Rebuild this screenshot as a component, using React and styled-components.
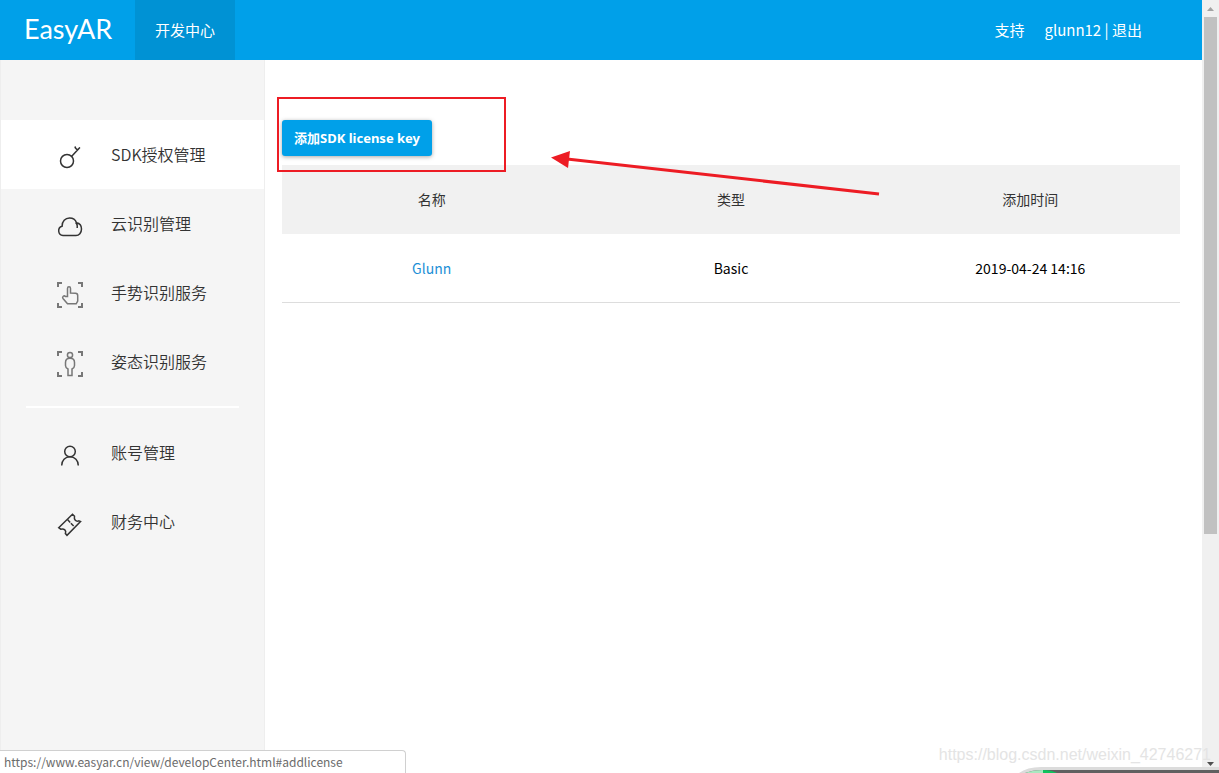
import React from 'react';
import styled, { createGlobalStyle } from 'styled-components';

const GlobalStyle = createGlobalStyle`
  * {
    box-sizing: border-box;
  }
  body {
    margin: 0;
    background: #fff;
    color: #333;
    font-family: 'Noto Sans CJK SC', sans-serif;
    font-size: 14px;
  }
  a {
    color: inherit;
    text-decoration: none;
  }
`;

const Window = styled.div`
  position: relative;
  display: flex;
  height: 100vh;
  overflow: hidden;
`;

const Page = styled.div`
  flex: 1;
  min-width: 0;
  display: flex;
  flex-direction: column;
`;

const Header = styled.header`
  display: flex;
  align-items: center;
  height: 60px;
  flex-shrink: 0;
  padding-right: 60px;
  background: #00a0e9;
  color: #fff;
  font-size: 15px;
`;

const Logo = styled.a`
  width: 135px;
  padding-left: 24px;
  font-family: Lato, sans-serif;
  font-size: 27px;
  font-weight: 400;
  line-height: 58px;
  align-self: flex-start;
`;

const HeaderTab = styled.a`
  width: 100px;
  line-height: 60px;
  text-align: center;
  background: #0092d4;
`;

const UserNav = styled.nav`
  display: flex;
  gap: 20px;
  margin-left: auto;
  line-height: 60px;
`;

const Body = styled.div`
  flex: 1;
  display: flex;
  min-height: 0;
`;

const Sidebar = styled.aside`
  width: 265px;
  flex-shrink: 0;
  padding-top: 60px;
  border: solid #eee;
  border-width: 0 1px;
  background: #f5f5f5;
`;

const MenuItem = styled.a`
  display: flex;
  align-items: center;
  gap: 27px;
  height: 69px;
  padding: 0 0 2px 55px;
  background: ${props => (props.$active ? '#fff' : 'transparent')};
  font-size: 16px;
  font-weight: 350;
`;

const Icon = styled.svg`
  width: 28px;
  height: 28px;
  margin-top: 6px;
  flex-shrink: 0;
  fill: none;
  stroke: ${props => props.$color || '#333'};
  stroke-width: 1.5;
`;

const Divider = styled.hr`
  height: 2px;
  margin: 10px 25px;
  border: 0;
  background: #fff;
`;

const Content = styled.main`
  flex: 1;
  padding: 60px 22px 0 17px;
`;

const AddButton = styled.button`
  display: block;
  height: 36px;
  margin-bottom: 9px;
  padding: 0 12px 2px;
  border: 0;
  border-radius: 3px;
  background: #00a0e9;
  box-shadow: 0 1px 4px rgba(0, 0, 0, 0.35);
  color: #fff;
  font-family: 'Noto Sans', 'Noto Sans CJK SC', sans-serif;
  font-size: 13px;
  font-weight: 700;
`;

const Table = styled.table`
  width: 100%;
  table-layout: fixed;
  border-collapse: collapse;
  text-align: center;
`;

const HeadCell = styled.th`
  height: 69px;
  padding: 0 0 2px;
  background: #f1f1f1;
  font-weight: 400;
`;

const Cell = styled.td`
  height: 68px;
  padding: 0;
  border-bottom: 1px solid #ddd;
  color: #000;
`;

const NameLink = styled.a`
  && {
    color: #1c8fd6;
  }
`;

const Scrollbar = styled.div`
  display: flex;
  flex-direction: column;
  align-items: center;
  width: 17px;
  flex-shrink: 0;
  background: #f0f0f0;
`;

const ScrollArrow = styled.svg`
  width: 17px;
  height: 17px;
  fill: ${props => props.$color};
`;

const ScrollTrack = styled.div`
  flex: 1;
  width: 13px;
`;

const ScrollThumb = styled.div`
  height: 70%;
  background: #c1c1c1;
`;

// Things lying over the page
const Marks = styled.svg`
  position: absolute;
  left: 277px;
  top: 97px;
  width: 603px;
  height: 100px;
  pointer-events: none;
`;

const StatusBar = styled.div`
  position: absolute;
  left: 0;
  bottom: 0;
  width: 406px;
  height: 23px;
  padding-left: 4px;
  border: solid #d0d0d0;
  border-width: 1px 1px 0 0;
  border-radius: 0 4px 0 0;
  background: #fff;
  color: #6b6b6b;
  font-size: 12px;
  line-height: 22px;
`;

const Watermark = styled.div`
  position: absolute;
  right: 8px;
  bottom: 8px;
  color: #e4e4e4;
  font-family: 'Liberation Sans', sans-serif;
  font-size: 16px;
  line-height: 20px;
`;

const Dock = styled.svg`
  position: absolute;
  right: 0;
  bottom: 0;
  width: 200px;
  height: 6px;
`;

const Corners = () => (
  <path d="M2 6V2h4M22 2h4v4M26 22v4h-4M6 26H2v-4" strokeWidth="2" />
);

const KeyIcon = () => (
  <Icon viewBox="0 0 28 28">
    <circle cx="11" cy="18" r="6.5" />
    <path d="M15.500 13.500 22.500 6M18.500 4.500l1.500-.5M18.800 4.300l2.700 3M22.500 6l1.300-1.500M20.500 7.500l3.500-3" />
  </Icon>
);

const CloudIcon = () => (
  <Icon viewBox="0 0 28 28">
    <path d="M7 23.500a4.700 4.700 0 0 1-.9-9.200C6 9.300 9.300 6 13.500 6c3.300 0 6 1.800 7 4.700 3.300.6 5 3.500 5 6.300 0 3.700-2.500 6.500-5.500 6.500zM19.500 10.500c1.500.8 2 2.500 1.700 5.500" />
  </Icon>
);

const GestureIcon = () => (
  <Icon viewBox="0 0 28 28" $color="#777">
    <Corners />
    <path d="M11.500 15.500V7.500c0-2.200 3-2.200 3 0V12l5 .3c1.600.1 2.200 1 2.200 2.200v5.500l-1.500 2.800h-8.700l-4.500-5.300c-1.200-1.800 1-3.500 2.500-2z" />
  </Icon>
);

const PoseIcon = () => (
  <Icon viewBox="0 0 28 28" $color="#777">
    <Corners />
    <circle cx="14" cy="5" r="2.6" />
    <path d="M12 25.500v-6.500c-1.800-.8-2.500-2-2.500-3.500v-3c0-2.700 1.700-4.200 4.500-4.200s4.500 1.500 4.500 4.200v3c0 1.500-.7 2.700-2.500 3.500v6.500z" />
  </Icon>
);

const AccountIcon = () => (
  <Icon viewBox="0 0 28 28">
    <circle cx="14" cy="10.5" r="5.3" />
    <path d="M5.700 24.500c0-5 3.500-8.700 8.300-8.700s8.300 3.700 8.300 8.700" />
  </Icon>
);

const TicketIcon = () => (
  <Icon viewBox="0 0 28 28">
    <path d="M2.700 17.700 16.500 4.300l2 1.900c-.8 3.600 1.500 5.600 4.200 4.700l1.800.7L11 25.300l-1.600-1.800c1.200-3-1.200-5.300-4.700-4.300z" />
    <path d="m11.500 9.500 6.700 7.200" strokeDasharray="4 1" />
  </Icon>
);

const services = [
  { label: 'SDK授权管理', icon: KeyIcon, active: true },
  { label: '云识别管理', icon: CloudIcon },
  { label: '手势识别服务', icon: GestureIcon },
  { label: '姿态识别服务', icon: PoseIcon },
];

const account = [
  { label: '账号管理', icon: AccountIcon },
  { label: '财务中心', icon: TicketIcon },
];

const licenses = [{ name: 'Glunn', type: 'Basic', added: '2019-04-24 14:16' }];

const Menu = ({ items }) =>
  items.map(({ label, icon: ItemIcon, active }) => (
    <MenuItem key={label} href="#" $active={active}>
      <ItemIcon />
      {label}
    </MenuItem>
  ));

function App() {
  return (
    <Window>
      <GlobalStyle />
      <Page>
        <Header>
          <Logo href="#">EasyAR</Logo>
          <HeaderTab href="#">开发中心</HeaderTab>
          <UserNav>
            <a href="#">支持</a>
            <span>
              <a href="#">glunn12</a> | <a href="#">退出</a>
            </span>
          </UserNav>
        </Header>
        <Body>
          <Sidebar>
            <Menu items={services} />
            <Divider />
            <Menu items={account} />
          </Sidebar>
          <Content>
            <AddButton type="button">添加SDK license key</AddButton>
            <Table>
              <thead>
                <tr>
                  <HeadCell>名称</HeadCell>
                  <HeadCell>类型</HeadCell>
                  <HeadCell>添加时间</HeadCell>
                </tr>
              </thead>
              <tbody>
                {licenses.map(license => (
                  <tr key={license.name}>
                    <Cell>
                      <NameLink href="#">{license.name}</NameLink>
                    </Cell>
                    <Cell>{license.type}</Cell>
                    <Cell>{license.added}</Cell>
                  </tr>
                ))}
              </tbody>
            </Table>
          </Content>
        </Body>
      </Page>
      <Scrollbar>
        <ScrollArrow viewBox="0 0 17 17" $color="#a3a3a3">
          <path d="M5 11h7L8.500 7z" />
        </ScrollArrow>
        <ScrollTrack>
          <ScrollThumb />
        </ScrollTrack>
        <ScrollArrow viewBox="0 0 17 17" $color="#505050">
          <path d="M5 6h7l-3.500 4z" />
        </ScrollArrow>
      </Scrollbar>
      <Marks viewBox="0 0 603 100">
        <rect x="1" y="1" width="227" height="73" fill="none" stroke="#ed1c24" strokeWidth="2" />
        <path d="M290 62 602 97" stroke="#ed1c24" strokeWidth="3" />
        <path d="M274 60.500 293 54 291 71z" fill="#ed1c24" />
      </Marks>
      <Dock viewBox="0 0 200 6">
        <path d="M0 6Q8 0 22 0h178v6z" fill="#dcdcdc" />
        <path d="M6 6Q14 3 22 3h178v3z" fill="#606060" />
        <path d="M6 6Q14 3 24 3v3z" fill="#a8e8c0" />
        <path d="M24 3q8 0 14 3H24z" fill="#0cc45c" />
      </Dock>
      <Watermark>https://blog.csdn.net/weixin_42746271</Watermark>
      <StatusBar>https://www.easyar.cn/view/developCenter.html#addlicense</StatusBar>
    </Window>
  );
}

export default App;
